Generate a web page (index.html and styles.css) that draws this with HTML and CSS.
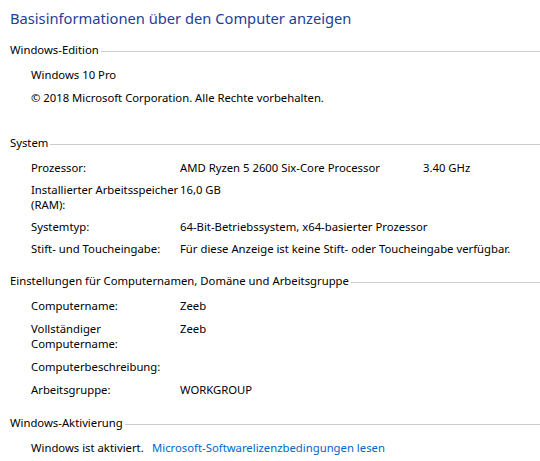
FILE: index.html
```html
<!DOCTYPE html>
<html lang="de">
<head>
<meta charset="utf-8">
<title>System</title>
<link rel="stylesheet" href="styles.css">
</head>
<body>
<main class="page">
  <h1 class="title">Basisinformationen über den Computer anzeigen</h1>

  <section class="section section--edition">
    <div class="heading"><span class="heading-text">Windows-Edition</span><span class="rule"></span></div>
    <div class="list">
      <div class="line">Windows 10 Pro</div>
      <div class="line">© 2018 Microsoft Corporation. Alle Rechte vorbehalten.</div>
    </div>
  </section>

  <section class="section section--system">
    <div class="heading"><span class="heading-text">System</span><span class="rule"></span></div>
    <div class="grid">
      <div class="label">Prozessor:</div>
      <div class="value cpu"><span class="cpu-name">AMD Ryzen 5 2600 Six-Core Processor</span><span>3.40 GHz</span></div>
      <div class="label">Installierter Arbeitsspeicher<br>(RAM):</div>
      <div class="value">16,0 GB</div>
      <div class="label">Systemtyp:</div>
      <div class="value">64-Bit-Betriebssystem, x64-basierter Prozessor</div>
      <div class="label">Stift- und Toucheingabe:</div>
      <div class="value">Für diese Anzeige ist keine Stift- oder Toucheingabe verfügbar.</div>
    </div>
  </section>

  <section class="section">
    <div class="heading"><span class="heading-text">Einstellungen für Computernamen, Domäne und Arbeitsgruppe</span><span class="rule"></span></div>
    <div class="grid grid--names">
      <div class="label">Computername:</div>
      <div class="value">Zeeb</div>
      <div class="label">Vollständiger<br>Computername:</div>
      <div class="value">Zeeb</div>
      <div class="label">Computerbeschreibung:</div>
      <div class="value"></div>
      <div class="label">Arbeitsgruppe:</div>
      <div class="value">WORKGROUP</div>
    </div>
  </section>

  <section class="section section--activation">
    <div class="heading"><span class="heading-text">Windows-Aktivierung</span><span class="rule"></span></div>
    <div class="list">
      <div class="line activation"><span class="status">Windows ist aktiviert.</span><a class="link" href="#">Microsoft-Softwarelizenzbedingungen lesen</a></div>
    </div>
  </section>
</main>
</body>
</html>
```

FILE: styles.css
```css
html, body {
  margin: 0;
  padding: 0;
  background: #ffffff;
}

body {
  font-family: "Noto Sans", "Open Sans", "Liberation Sans", sans-serif;
  font-size: 11.3px;
  line-height: 15px;
  color: #000000;
}

.page {
  padding: 8px 0 0 10px;
}

.title {
  margin: 0;
  font-size: 14.7px;
  line-height: 20px;
  font-weight: normal;
  color: #1f4096;
}

.section {
  margin-top: 17px;
}

.section--edition {
  margin-top: 14px;
}

.section--system {
  margin-top: 30px;
}

.section--activation {
  margin-top: 18px;
}

.heading {
  display: flex;
  align-items: flex-start;
}

.heading-text {
  white-space: nowrap;
}

.rule {
  flex: 1;
  height: 1px;
  margin-top: 9px;
  margin-left: 2px;
  background: #cccccc;
}

.list {
  display: flex;
  flex-direction: column;
  gap: 8px;
  margin-top: 10px;
  padding-left: 21px;
}

.grid {
  display: grid;
  grid-template-columns: 149px 1fr;
  row-gap: 7px;
  margin-top: 10px;
  padding-left: 21px;
}

.grid--names {
  row-gap: 8px;
}

.label,
.value {
  white-space: nowrap;
}

.cpu {
  display: flex;
}

.cpu-name {
  width: 243px;
}

.activation {
  display: flex;
}

.status {
  width: 121px;
}

.link {
  color: #0066cc;
  text-decoration: none;
}
```
